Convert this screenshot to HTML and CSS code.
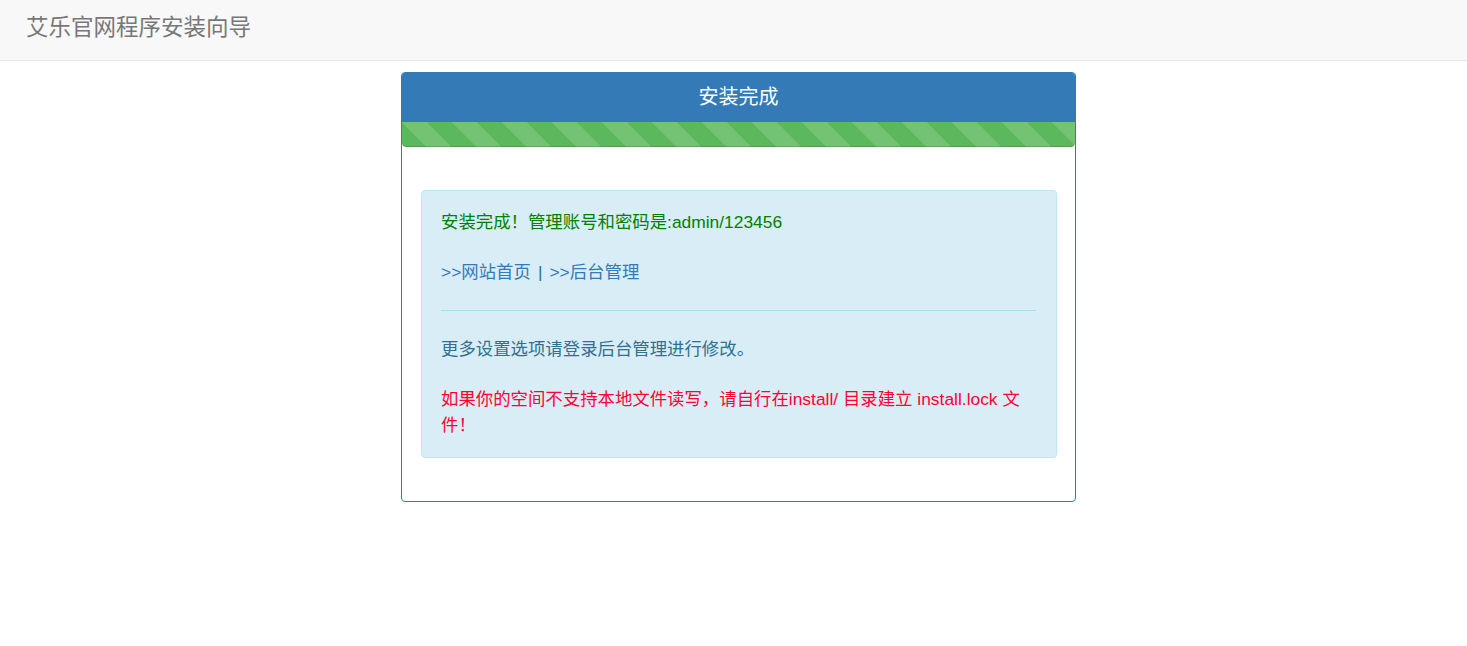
FILE: index.html
```html
<!DOCTYPE html>
<html lang="zh-CN">
<head>
    <meta charset="UTF-8">
    <title>艾乐官网程序安装向导</title>
    <link rel="stylesheet" href="styles.css">
</head>
<body>
    <!-- Верхняя панель -->
    <div class="navbar">
        <span class="brand">艾乐官网程序安装向导</span>
    </div>

    <div class="wrap">
        <div class="panel">
            <div class="panel-heading">安装完成</div>
            <div class="progress">
                <div class="progress-bar"></div>
            </div>
            <div class="panel-body">
                <div class="alert">
                    <p class="ok">安装完成！管理账号和密码是:admin/123456</p>
                    <p><a href="#">&gt;&gt;网站首页</a><span class="sep">|</span><a href="#">&gt;&gt;后台管理</a></p>
                    <hr>
                    <p>更多设置选项请登录后台管理进行修改。</p>
                    <p class="warn">如果你的空间不支持本地文件读写，请自行在install/ 目录建立 install.lock 文件！</p>
                </div>
            </div>
        </div>
    </div>
</body>
</html>
```

FILE: styles.css
```css
/* Общие стили */
* {
    margin: 0;
    padding: 0;
    box-sizing: border-box;
}

body {
    font-family: "Liberation Sans", "Noto Sans CJK SC", sans-serif;
    font-size: 14px;
    line-height: 1.42857;
    color: #333333;
    background-color: #FFFFFF;
}

/* Навигация */
.navbar {
    height: 61px;
    background-color: #f8f8f8;
    border-bottom: 1px solid #e7e7e7;
    padding-left: 26px;
    display: flex;
    align-items: center;
}

.brand {
    font-size: 22.5px;
    color: #777777;
    margin-top: -4px;
}

/* Панель */
.wrap {
    padding-left: 10px;
    padding-top: 11px;
}

.panel {
    width: 675px;
    margin: 0 auto;
    border: 1px solid #337ab7;
    border-radius: 4px;
    overflow: hidden;
}

.panel-heading {
    height: 49px;
    background-color: #337ab7;
    color: #FFFFFF;
    font-size: 20px;
    text-align: center;
    line-height: 49px;
}

.progress {
    height: 25px;
    background-color: #f5f5f5;
    border-radius: 0 0 4px 4px;
    overflow: hidden;
}

.progress-bar {
    width: 100%;
    height: 100%;
    background-color: #5cb85c;
    background-image: linear-gradient(45deg, rgba(255, 255, 255, .15) 25%, transparent 25%, transparent 50%, rgba(255, 255, 255, .15) 50%, rgba(255, 255, 255, .15) 75%, transparent 75%, transparent);
    background-size: 50px 50px;
    box-shadow: inset 0 -1px 0 rgba(0, 0, 0, .15);
    border-radius: 0 0 4px 4px;
}

.panel-body {
    padding: 43px 18px 43px 19px;
}

/* Сообщение */
.alert {
    background-color: #d9edf7;
    border: 1px solid #bce8f1;
    border-radius: 4px;
    color: #31708f;
    padding: 18px 20px 19px 19px;
    font-size: 17.4px;
    line-height: 26px;
}

.alert p {
    margin-bottom: 24px;
}

.alert p:last-child {
    margin-bottom: 0;
}

.alert a {
    color: #337ab7;
    text-decoration: none;
}

.alert .sep {
    display: inline-block;
    margin: 0 7px;
    font-weight: 300;
    color: #31708f;
}

.alert hr {
    border: 0;
    border-top: 1px solid #a6e1ec;
    margin: 25px 0 25px;
}

.ok {
    color: #008000;
}

.warn {
    color: #ff0033;
}
```
